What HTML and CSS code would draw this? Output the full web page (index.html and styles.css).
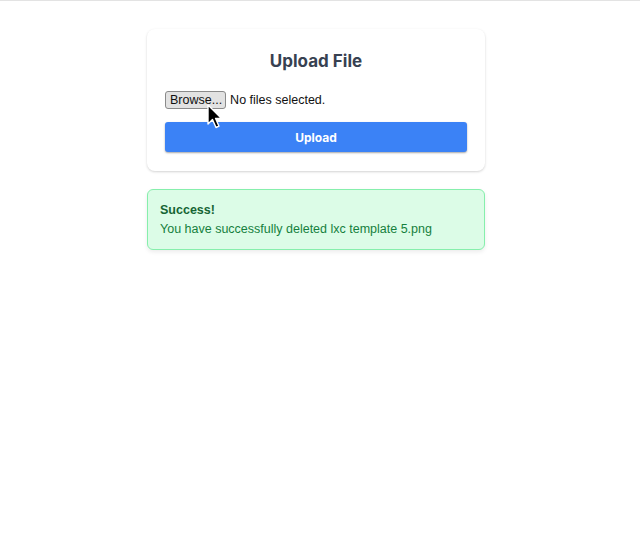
FILE: index.html
```html
<!DOCTYPE html>
<html lang="en">
<head>
  <meta charset="UTF-8" />
  <title>Upload File</title>
  <link rel="stylesheet" href="styles.css">
</head>
<body>
  <div class="wrap">
    <!-- Upload card -->
    <div class="card">
      <h1 class="title">Upload File</h1>
      <div class="file-row">
        <span class="browse">Browse...</span>
        <span class="file-name">No files selected.</span>
        <svg class="cursor" width="16" height="26" viewBox="0 0 16 26">
          <path d="M1 1 L1 20 L5.5 15.5 L9 23.5 L12 22.2 L8.6 14.5 L14.5 14.5 Z" fill="#000" stroke="#fff" stroke-width="1.4" stroke-linejoin="round"/>
        </svg>
      </div>
      <button class="upload-btn">Upload</button>
    </div>

    <!-- Flash message -->
    <div class="alert">
      <div class="alert-title">Success!</div>
      <div class="alert-text">You have successfully deleted lxc template 5.png</div>
    </div>
  </div>
</body>
</html>
```

FILE: styles.css
```css
body {
  margin: 0;
  padding: 0 8px 0 0;
  font-family: Inter, "Noto Sans", sans-serif;
  background: #fff;
  border-top: 1px solid #e3e3e3;
  min-height: 545px;
  box-sizing: border-box;
}

.wrap {
  width: 338px;
  margin: 28px auto 0;
}

.card {
  background: #fff;
  border-radius: 8px;
  padding: 18px 18px 19px;
  box-shadow: 0 1px 3px rgba(0,0,0,0.12), 0 1px 2px rgba(0,0,0,0.06);
}

.title {
  margin: 0 0 16px;
  font-size: 17px;
  line-height: 28px;
  font-weight: 700;
  text-align: center;
  color: #374151;
}

.file-row {
  position: relative;
  display: flex;
  align-items: center;
  height: 18px;
  font-family: "Liberation Sans", Arial, sans-serif;
  font-size: 12.5px;
  color: #111;
}
.browse {
  box-sizing: border-box;
  height: 18px;
  padding: 0 3px 0 4px;
  line-height: 16px;
  background: #e2e2e2;
  border: 1px solid #8a8a8a;
  border-radius: 3px;
  margin-right: 4px;
}
.cursor {
  position: absolute;
  left: 42px;
  top: 13px;
}

.upload-btn {
  display: block;
  width: 100%;
  height: 30px;
  margin-top: 13px;
  border: none;
  border-radius: 3px;
  background: #3b82f6;
  color: #fff;
  font-family: inherit;
  font-size: 12px;
  font-weight: 700;
  box-shadow: 0 1px 2px rgba(0,0,0,0.35);
}

.alert {
  margin-top: 18px;
  background: #dcfce7;
  border: 1px solid #86efac;
  border-radius: 6px;
  padding: 11px 12px 10px;
  color: #15803d;
  font-family: "Liberation Sans", Arial, sans-serif;
  font-size: 12.5px;
  line-height: 19px;
  box-shadow: 0 2px 4px rgba(0,0,0,0.08);
}
.alert-title {
  font-weight: 700;
  color: #166534;
}
```
